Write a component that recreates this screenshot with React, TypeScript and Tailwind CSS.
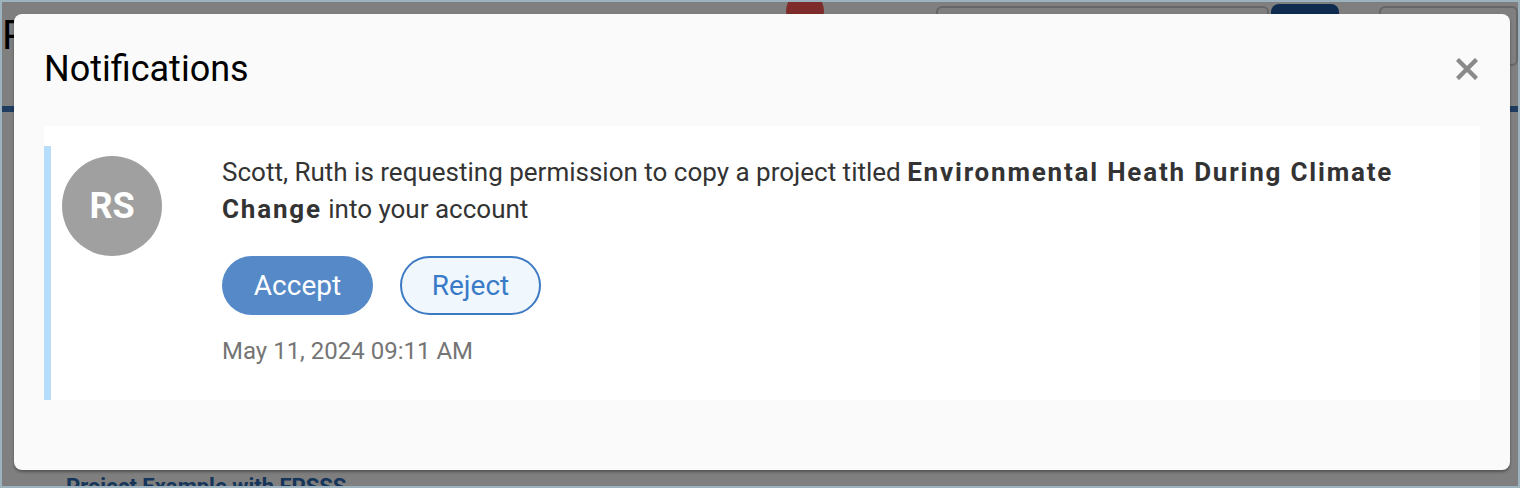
import React from 'react'

function CloseIcon() {
  return (
    <svg width="22" height="22" viewBox="0 0 22 22" fill="none">
      <path d="M3 3 L19 19 M19 3 L3 19" stroke="#8a8a8a" strokeWidth="4.4" strokeLinecap="square" />
    </svg>
  )
}

function BackgroundPage() {
  return (
    <div className="h-full w-full bg-white">
      <div className="flex h-[104px] items-start">
        <div className="mt-[14px] w-[12px] overflow-hidden text-[40px] leading-none text-black">P</div>
        <div className="ml-[772px] mt-[-10px] h-[38px] w-[38px] rounded-full bg-[#fb5656]" />
        <div className="ml-[112px] mt-[4px] h-[60px] w-[336px] rounded-md border-2 border-[#cccccc]" />
        <div className="ml-[2px] mt-[2px] h-[60px] w-[68px] rounded-t-lg bg-[#1e56a0]" />
        <div className="ml-[40px] mt-[4px] h-[60px] w-[140px] rounded-md border-2 border-[#cccccc]" />
      </div>
      <div className="h-[6px] w-full bg-[#3a78c0]" />
      <div className="mt-[364px] pl-[64px] text-[22px] font-bold leading-none text-[#2d6bb5]">
        Project Example with FPSSS
      </div>
    </div>
  )
}

export default function App() {
  return (
    <div className="relative h-[488px] w-[1520px] overflow-hidden border-2 border-[#9cb2bf] font-['Roboto',sans-serif]">
      <BackgroundPage />
      <div className="absolute inset-0 bg-black/50" />
      <div className="absolute left-[12px] top-[12px] flex h-[456px] w-[1496px] flex-col rounded-lg bg-[#fafafa] px-[30px] pt-[34px] shadow-[0_2px_3px_rgba(0,0,0,0.35)]">
        <div className="flex items-center justify-between pr-[1px]">
          <h2 className="text-[36px] leading-[42px] text-black">Notifications</h2>
          <button className="flex h-[24px] w-[24px] items-center justify-center">
            <CloseIcon />
          </button>
        </div>

        <div className="mt-[36px] bg-white pt-[20px]">
          <div className="flex border-l-[7px] border-[#b6defc] pb-[34px] pl-[11px] pr-[40px] pt-[8px]">
            <div className="mt-[2px] flex h-[100px] w-[100px] shrink-0 items-center justify-center rounded-full bg-[#a0a0a0] text-[36px] font-bold text-white">
              RS
            </div>
            <div className="ml-[60px] flex flex-col">
              <p className="text-[26px] leading-[37px] text-[#333333]">
                Scott, Ruth is requesting permission to copy a project titled{' '}
                <b className="font-bold tracking-[1.8px]">Environmental Heath During Climate Change</b> into your
                account
              </p>
              <div className="mt-[28px] flex gap-[27px]">
                <button className="h-[59px] w-[151px] rounded-full bg-[#5589c8] text-[28px] text-white">
                  Accept
                </button>
                <button className="h-[59px] w-[141px] rounded-full border-2 border-[#3d7ac4] bg-[#f0f7fd] text-[28px] text-[#3a7bc8]">
                  Reject
                </button>
              </div>
              <div className="mt-[21px] text-[24px] leading-[30px] text-[#757575]">May 11, 2024 09:11 AM</div>
            </div>
          </div>
        </div>
      </div>
    </div>
  )
}
